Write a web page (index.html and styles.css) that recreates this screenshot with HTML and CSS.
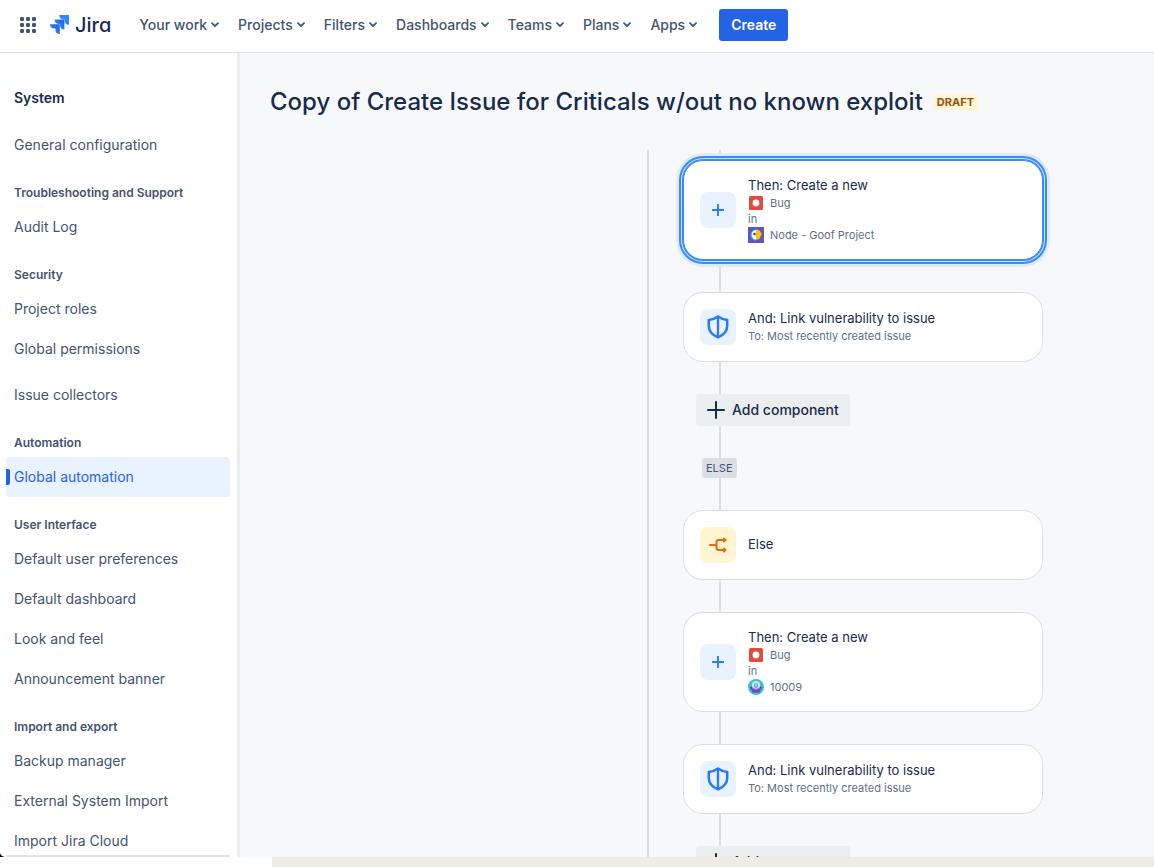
FILE: index.html
```html
<!DOCTYPE html>
<html lang="en">
<head>
<meta charset="utf-8">
<meta name="viewport" content="width=device-width, initial-scale=1">
<title>Global automation - Jira</title>
<link rel="stylesheet" href="styles.css">
</head>
<body>
<svg class="sprite" aria-hidden="true">
  <symbol id="chevron" viewBox="0 0 8 6"><path d="M1 1.2 4 4.2 7 1.2" fill="none" stroke="currentColor" stroke-width="1.8" stroke-linecap="round" stroke-linejoin="round"/></symbol>
  <symbol id="plus" viewBox="0 0 12 12"><path d="M6 .7v10.6M.7 6h10.6" stroke="currentColor" stroke-width="1.9" stroke-linecap="round"/></symbol>
  <symbol id="shield" viewBox="0 0 24 26"><path d="M12 2.6C9.500 4.400 6.500 5.600 2.800 6V12c0 5 3.400 9 9.200 11.400 5.800-2.400 9.200-6.400 9.200-11.400V6C17.500 5.600 14.500 4.400 12 2.600Z" fill="none" stroke="currentColor" stroke-width="2.500" stroke-linejoin="round"/><path d="M12 2.500v21" stroke="currentColor" stroke-width="2.300"/></symbol>
  <symbol id="bug" viewBox="0 0 14 14"><rect width="14" height="14" rx="1.500" fill="#e5493a"/><circle cx="7" cy="7" r="3.400" fill="#fff"/></symbol>
</svg>

<header class="topbar">
  <button class="switcher" aria-label="Switch apps">
    <svg width="16" height="16" viewBox="0 0 16 16" fill="currentColor"><rect width="4" height="4" rx="1.300"/><rect x="6" width="4" height="4" rx="1.300"/><rect x="12" width="4" height="4" rx="1.300"/><rect y="6" width="4" height="4" rx="1.300"/><rect x="6" y="6" width="4" height="4" rx="1.300"/><rect x="12" y="6" width="4" height="4" rx="1.300"/><rect y="12" width="4" height="4" rx="1.300"/><rect x="6" y="12" width="4" height="4" rx="1.300"/><rect x="12" y="12" width="4" height="4" rx="1.300"/></svg>
  </button>
  <a class="logo" href="#">
    <svg width="19" height="19" viewBox="0 0 19 19" aria-hidden="true">
      <defs><linearGradient id="fade" x1="1" y1="0" x2="0" y2="1"><stop offset=".2" stop-color="#2369e0"/><stop offset=".8" stop-color="#2f86ff"/></linearGradient></defs>
      <path d="M9.200 0H19v9.800A4.400 4.400 0 0 1 14.600 5.600V4.400H13.400A4.400 4.400 0 0 1 9.200 0Z" fill="#2f86ff"/>
      <path d="M4.600 4.600h9.800v9.800A4.400 4.400 0 0 1 10 10.200V9H8.800A4.400 4.400 0 0 1 4.600 4.600Z" fill="url(#fade)"/>
      <path d="M0 9.200h9.800V19a4.400 4.400 0 0 1-4.400-4.200v-1.200H4.200A4.400 4.400 0 0 1 0 9.200Z" fill="url(#fade)"/>
    </svg>
    <span>Jira</span>
  </a>
  <nav class="menu" aria-label="Primary">
    <button>Your work<svg><use href="#chevron"/></svg></button>
    <button>Projects<svg><use href="#chevron"/></svg></button>
    <button>Filters<svg><use href="#chevron"/></svg></button>
    <button>Dashboards<svg><use href="#chevron"/></svg></button>
    <button>Teams<svg><use href="#chevron"/></svg></button>
    <button>Plans<svg><use href="#chevron"/></svg></button>
    <button>Apps<svg><use href="#chevron"/></svg></button>
  </nav>
  <button class="create">Create</button>
</header>

<div class="body">
  <aside class="sidebar">
    <h2>System</h2>
    <nav class="links" aria-label="System settings">
      <a href="#">General configuration</a>
      <h3>Troubleshooting and Support</h3>
      <a href="#">Audit Log</a>
      <h3>Security</h3>
      <a href="#">Project roles</a>
      <a href="#">Global permissions</a>
      <a class="apart" href="#">Issue collectors</a>
      <h3>Automation</h3>
      <a class="current" href="#" aria-current="page">Global automation</a>
      <h3>User Interface</h3>
      <a href="#">Default user preferences</a>
      <a href="#">Default dashboard</a>
      <a href="#">Look and feel</a>
      <a href="#">Announcement banner</a>
      <h3>Import and export</h3>
      <a href="#">Backup manager</a>
      <a href="#">External System Import</a>
      <a href="#">Import Jira Cloud</a>
    </nav>
    <div class="sidebar-end"></div>
    <svg class="corner" width="5" height="4" viewBox="0 0 5 4" aria-hidden="true"><path d="M0 0Q1 3.500 5 4H0Z" fill="#111"/></svg>
  </aside>

  <main class="content">
    <div class="heading">
      <h1>Copy of Create Issue for Criticals w/out no known exploit</h1>
      <span class="draft">DRAFT</span>
    </div>
    <div class="canvas">
      <div class="branch">
        <article class="card selected">
          <span class="tile"><svg class="i-plus"><use href="#plus"/></svg></span>
          <div class="text">
            <h4>Then: Create a new</h4>
            <p><svg class="i-bug"><use href="#bug"/></svg>Bug</p>
            <p>in</p>
            <p><svg class="i-avatar" viewBox="0 0 16 16"><rect width="16" height="16" fill="#6554c0"/><path d="M8 2.500a5.500 5.500 0 1 0 0 11Z" fill="#35b8e8"/><path d="M8.500 2.800C5.500 3 3.700 5 3.700 7.600c0 3 1.800 5 4.800 5.200Z" fill="#f4f8ff"/><path d="M8.200 2.500c3.300 0 5 2.400 5.600 5.100-.9 1.200-1.600 2.200-2 3.500-.6 1-1.700 1.500-3.600 1.500Z" fill="#ffc400"/><circle cx="6.500" cy="7" r="1.300" fill="#344563"/></svg>Node - Goof Project</p>
          </div>
        </article>
        <article class="card">
          <span class="tile"><svg class="i-shield"><use href="#shield"/></svg></span>
          <div class="text"><h4>And: Link vulnerability to issue</h4><p>To: Most recently created issue</p></div>
        </article>
        <button class="add"><svg viewBox="0 0 18 18"><path d="M9 1v16M1 9h16" stroke="currentColor" stroke-width="2" stroke-linecap="round"/></svg>Add component</button>
        <span class="else">ELSE</span>
        <article class="card">
          <span class="tile condition"><svg class="i-fork" viewBox="0 0 18 16" fill="none" stroke="currentColor" stroke-width="2" stroke-linecap="round" stroke-linejoin="round"><path d="M1 8h6M15.500 3H9.500Q7.500 3 7.500 5v6Q7.500 13 9.500 13h6"/><path d="M14.800 1 17 3l-2.200 2ZM14.800 11l2.200 2-2.200 2Z" fill="currentColor" stroke-width="1.200"/></svg></span>
          <div class="text"><h4>Else</h4></div>
        </article>
        <article class="card">
          <span class="tile"><svg class="i-plus"><use href="#plus"/></svg></span>
          <div class="text">
            <h4>Then: Create a new</h4>
            <p><svg class="i-bug"><use href="#bug"/></svg>Bug</p>
            <p>in</p>
            <p><svg class="i-avatar" viewBox="0 0 16 16"><circle cx="8" cy="8" r="8" fill="#3fc1c9"/><path d="M2 8.200C3.500 6.200 12.500 6.200 14 8.200c-.3 2-1.400 3-2.400 3.400L12 13.600H4l.4-2C3 11 2.200 10 2 8.200Z" fill="#6546bd"/><circle cx="8" cy="6.200" r="4.200" fill="#c9e8ff"/><rect x="6.200" y="4" width="3.600" height="4.800" rx="1.600" fill="#5e8fd6"/><path d="M7 5.300h2M7 6.900h2" stroke="#fff" stroke-width=".8"/><path d="M3.800 9.300Q8 11.300 12.200 9.300" fill="none" stroke="#8f69dc"/></svg>10009</p>
          </div>
        </article>
        <article class="card">
          <span class="tile"><svg class="i-shield"><use href="#shield"/></svg></span>
          <div class="text"><h4>And: Link vulnerability to issue</h4><p>To: Most recently created issue</p></div>
        </article>
        <button class="add"><svg viewBox="0 0 18 18"><path d="M9 1v16M1 9h16" stroke="currentColor" stroke-width="2" stroke-linecap="round"/></svg>Add component</button>
      </div>
    </div>
  </main>
</div>
<div class="strip"></div>
</body>
</html>
```
FILE: styles.css
```css
* { box-sizing: border-box; }
body {
  margin: 0;
  height: 100vh;
  display: flex;
  flex-direction: column;
  overflow: hidden;
  background: #fff;
  color: #172b4d;
  font: 14px/20px Inter, "Liberation Sans", sans-serif;
}
h1, h2, h3, h4, p { margin: 0; }
button { border: 0; padding: 0; background: none; color: inherit; font: inherit; cursor: pointer; }
a { color: inherit; text-decoration: none; }
svg { flex: none; }
.sprite { position: absolute; width: 0; height: 0; }

.topbar {
  flex: none;
  display: flex;
  align-items: center;
  height: 53px;
  padding: 0 20px 3px;
  border-bottom: 1px solid #dfe1e6;
}
.switcher { display: flex; color: #44546f; }
.logo { display: flex; align-items: center; gap: 6px; margin: 0 28px 0 14px; }
.logo span { font-size: 20px; line-height: 24px; font-weight: 500; font-feature-settings: "cv11"; }
.menu { display: flex; gap: 19px; }
.menu button { display: flex; align-items: center; gap: 4px; color: #44546f; font-weight: 500; }
.menu svg { width: 8px; height: 6px; }
.create { height: 32px; margin-left: 22px; padding: 0 12px; border-radius: 3px; background: #2563e6; color: #fff; font-weight: 600; }

.body { flex: 1; min-height: 0; display: flex; }
.sidebar {
  position: relative;
  flex: none;
  width: 240px;
  padding: 35px 7px 0 6px;
  border-right: 3px solid #ebecee;
  overflow: hidden;
}
.sidebar h2 { padding-left: 8px; margin-bottom: 17px; font-size: 14px; line-height: 20px; font-weight: 600; }
.links { display: flex; flex-direction: column; }
.links a { padding: 10px 8px; border-radius: 3px; color: #44546f; }
.links h3 { padding: 20px 8px 6px; font-size: 12px; line-height: 16px; font-weight: 600; color: #44546f; }
.links .apart { margin-top: 6px; }
.links .current { position: relative; background: #e9f2ff; color: #2563e6; }
.current::before { content: ""; position: absolute; left: 0; top: 12px; width: 4px; height: 16px; border-radius: 0 2px 2px 0; background: #2563e6; }
.sidebar-end { position: absolute; left: 6px; right: 7px; bottom: 0; height: 2px; background: #e2e4e9; }
.corner { position: absolute; left: 0; bottom: 0; }

.content { flex: 1; min-width: 0; display: flex; flex-direction: column; padding-top: 35px; background: #f7f8fa; overflow: hidden; }
.heading { display: flex; align-items: center; gap: 10px; padding-left: 30px; }
h1 { font-size: 24px; line-height: 28px; font-weight: 500; white-space: nowrap; }
.draft { padding: 0 4px; border-radius: 3px; background: #fff7d6; color: #974f0c; font-size: 11px; line-height: 16px; font-weight: 700; }
.canvas { flex: 1; min-height: 0; display: flex; justify-content: flex-end; margin-top: 34px; padding-right: 111px; }
.branch {
  display: flex;
  flex-direction: column;
  align-items: flex-start;
  gap: 32px;
  padding: 10px 0 0 34px;
  border-left: 2px solid #dcdfe4;
  background: linear-gradient(#dcdfe4, #dcdfe4) 70px 0 / 2px 100% no-repeat;
}
.branch > * { flex: none; }
.card {
  display: flex;
  align-items: center;
  gap: 12px;
  width: 360px;
  padding: 16px;
  border: 1px solid #dcdfe4;
  border-radius: 20px;
  background: #fff;
}
.selected { border-color: #388bff; box-shadow: 0 0 0 1px #388bff, 0 0 0 2px #cfe1fd, 0 0 0 4px #388bff, 0 0 0 7px #deebfc; }
.tile { flex: none; display: grid; place-items: center; width: 36px; height: 36px; border-radius: 8px; background: #e9f2ff; color: #2979ff; }
.condition { background: #fff5d1; color: #e56910; }
.i-plus { width: 12px; height: 12px; }
.i-shield { width: 24px; height: 26px; }
.i-fork { width: 18px; height: 16px; }
.text h4 { padding-bottom: 2px; font-size: 13px; line-height: 16px; font-weight: 400; }
.text p { display: flex; align-items: center; gap: 6px; font-size: 11px; line-height: 16px; color: #626f86; }
.i-bug { width: 14px; height: 14px; margin: 0 1px; }
.i-avatar { width: 16px; height: 16px; }
.add { display: flex; align-items: center; gap: 7px; height: 32px; margin-left: 13px; padding: 0 11px; border-radius: 3px; background: #ebeeef; font-weight: 500; }
.add svg { width: 18px; height: 18px; }
.else { margin-left: 19px; padding: 0 4px; border-radius: 3px; background: #dcdfe4; color: #44546f; font-size: 11px; line-height: 20px; }
.strip { flex: none; height: 10px; margin-left: 272px; background: #eeece5; }
```
